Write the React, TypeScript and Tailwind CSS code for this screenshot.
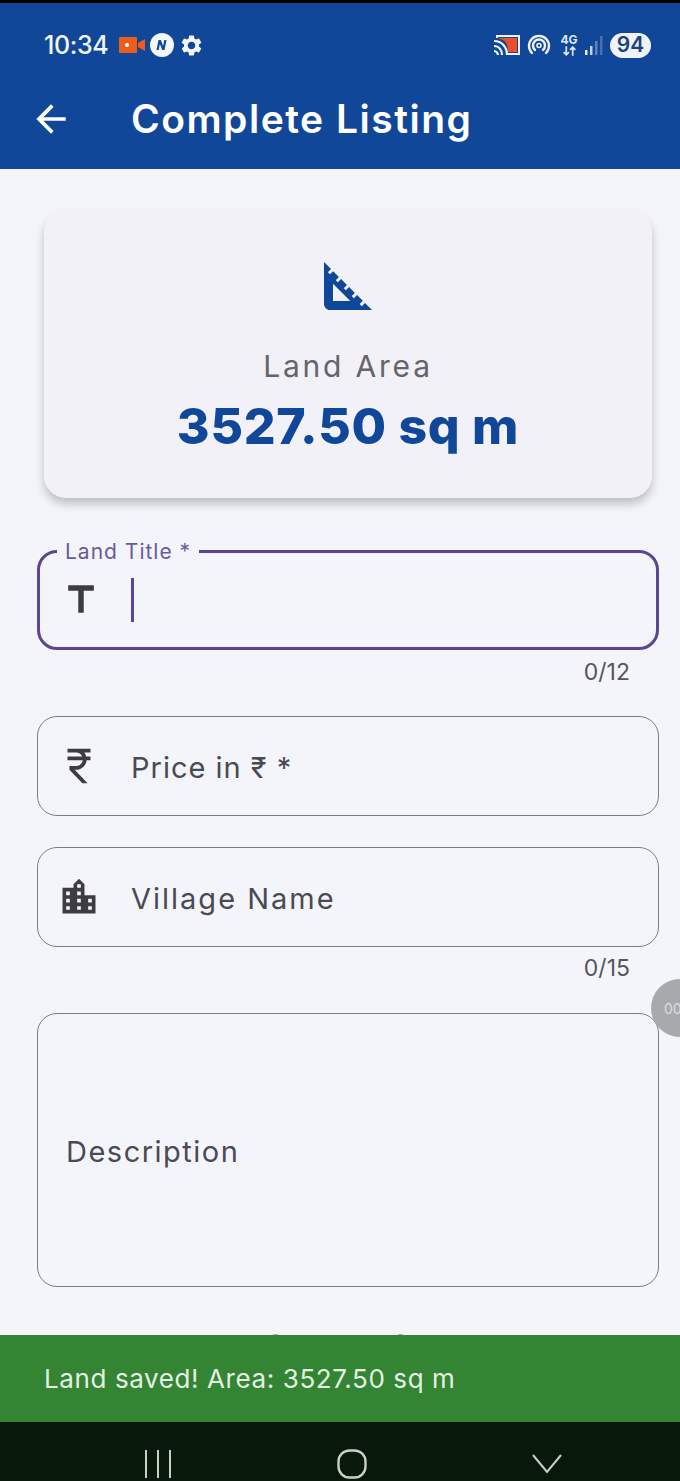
import React from "react";
import { MdArrowBack, MdSettings, MdSquareFoot, MdTitle, MdCurrencyRupee, MdLocationCity } from "react-icons/md";

const font = { fontFamily: '"Inter", "Noto Sans", sans-serif' };

function StatusBar() {
  return (
    <div className="flex h-[42px] items-center justify-between pl-[44px] pr-[29px]">
      <div className="flex items-center">
        <span className="text-[25px] font-medium leading-none text-[#f2f6fb] tracking-[-0.4px]">10:34</span>
        <svg viewBox="0 0 26 16" className="ml-[11px] h-[16px] w-[26px]">
          <rect x="0" y="0" width="18" height="16" rx="1" fill="#ee5d1c" />
          <circle cx="8" cy="8" r="2" fill="#fff" />
          <path d="M19 6l7-4v12l-7-4z" fill="#ee5d1c" />
        </svg>
        <svg viewBox="0 0 24 24" className="ml-[5px] h-[24px] w-[24px]">
          <circle cx="12" cy="12" r="12" fill="#f4f7fb" />
          <path d="M6.5 17l2-10h2.4l2.2 6 1.2-6h2.2l-2 10h-2.3l-2.3-6-1.2 6z" fill="#114799" />
        </svg>
        <MdSettings className="ml-[5px] text-[#f4f7fb]" size={25} />
      </div>
      <div className="flex items-center">
        <svg viewBox="0 0 28 24" className="h-[24px] w-[28px]">
          <path d="M4 5V3h22v18H14" fill="none" stroke="#eef3fa" strokeWidth="2" />
          <path d="M6 5h18v14H15C15 11 12 6 6 6z" fill="#ee4f2b" />
          <path d="M1 8c8 0 13 6 13 14M1 13c5 0 8 4 8 9M1 18c2 0 4 2 4 4" fill="none" stroke="#f4f7fb" strokeWidth="2.2" />
        </svg>
        <svg viewBox="0 0 24 24" className="ml-[6px] h-[24px] w-[24px]">
          <path d="M5 20A10 10 0 1 1 19 20M8 17a6 6 0 1 1 8 0" fill="none" stroke="#eef3fa" strokeWidth="2.4" strokeLinecap="round" />
          <circle cx="12" cy="12.5" r="2" fill="none" stroke="#eef3fa" strokeWidth="1.6" />
        </svg>
        <div className="ml-[9px] flex w-[18px] flex-col items-center leading-none text-[#dfe7f3]">
          <span className="text-[12px] font-bold leading-[12px]">4G</span>
          <svg viewBox="0 0 14 9" className="h-[10px] w-[15px]">
            <path d="M4 0v8M1.5 5.5L4 8l2.500-2.500M10 9V1M7.500 3.500L10 1l2.500 2.500" fill="none" stroke="#dfe7f3" strokeWidth="1.6" />
          </svg>
        </div>
        <svg viewBox="0 0 18 20" className="ml-[7px] h-[20px] w-[18px]">
          <rect x="0" y="15" width="2.500" height="5" fill="#e6edf6" />
          <rect x="5" y="11" width="2.500" height="9" fill="#c4d2e6" />
          <rect x="10" y="6" width="2.500" height="14" fill="#5f82b8" />
          <rect x="15" y="1" width="2.500" height="19" fill="#4a70ad" />
        </svg>
        <div className="ml-[7px] flex h-[25px] w-[41px] items-center justify-center rounded-[13px] bg-[#f0f4f9] text-[21px] font-semibold text-[#1b4380]">94</div>
      </div>
    </div>
  );
}

function Field({ icon, label, height, tracking }: { icon?: React.ReactNode; label: string; height: string; tracking: string }) {
  return (
    <div className={`flex items-center rounded-[20px] border-[1.5px] border-[#7a7d84] ${height}`}>
      {icon ? <div className="mr-[11px] flex w-[82px] justify-center">{icon}</div> : <div className="w-[28px]" />}
      <span className={`pt-[2px] text-[29px] leading-none text-[#4a4a52] ${tracking}`}>{label}</span>
    </div>
  );
}

export default function App() {
  return (
    <div style={font} className="relative flex h-[1481px] w-[680px] flex-col overflow-hidden bg-[#f4f5fb]">
      <header className="h-[169px] shrink-0 border-t-[3px] border-black bg-[#114799]">
        <div className="pt-[21px]"><StatusBar /></div>
        <div className="flex h-[90px] items-center pl-[29px] pt-[15px]">
          <MdArrowBack className="text-white" size={44} />
          <h1 className="ml-[58px] text-[39px] font-semibold leading-none tracking-[1.5px] text-white">Complete Listing</h1>
        </div>
      </header>

      <main className="flex min-h-0 flex-1 flex-col">
        <section className="ml-[44px] mr-[28px] mt-[41px] flex h-[288px] flex-col items-center rounded-[22px] bg-[#f3f1f8] pt-[40px] shadow-[0_6px_10px_rgba(0,0,0,0.22)]">
          <MdSquareFoot className="text-[#114799]" size={72} />
          <div className="mt-[29px] text-[30px] leading-none tracking-[2.8px] text-[#66646a]">Land Area</div>
          <div className="mt-[20px] text-[50px] font-extrabold leading-none tracking-[0.7px] text-[#114799]">3527.50 sq m</div>
        </section>

        <div className="ml-[37px] mr-[21px] mt-[52px] flex flex-col">
          <div className="relative flex h-[100px] items-center rounded-[20px] border-[3px] border-[#5b4596]">
            <div className="absolute left-[17px] top-[-13px] bg-[#f4f5fb] px-[8px] text-[21px] leading-[24px] tracking-[1px] text-[#6a5a9e]">Land Title *</div>
            <div className="flex w-[81px] justify-center"><MdTitle className="text-[#3c3c42]" size={44} /></div>
            <div className="ml-[10px] h-[44px] w-[3px] bg-[#5b4596]" />
          </div>
          <div className="mt-[9px] pr-[29px] text-right text-[23px] leading-[26px] text-[#55555c]">0/12</div>
          <div className="mt-[31px] flex flex-col gap-[31px]">
            <Field height="h-[100px]" tracking="tracking-[1px]" label="Price in ₹ *" icon={<MdCurrencyRupee className="text-[#3c3c42]" size={46} />} />
            <Field height="h-[100px]" tracking="tracking-[2px]" label="Village Name" icon={<MdLocationCity className="text-[#3c3c42]" size={44} />} />
          </div>
          <div className="mt-[8px] pr-[29px] text-right text-[23px] leading-[26px] text-[#55555c]">0/15</div>
          <div className="mt-[32px]"><Field height="h-[274px]" tracking="tracking-[1.5px]" label="Description" /></div>
        </div>
      </main>

      <div className="absolute right-[-29px] top-[979px] flex h-[58px] w-[58px] items-center justify-start rounded-full bg-[#a8a9ac] pl-[13px] text-[14px] text-[#dcdde0]">00</div>

      <div className="relative flex h-[87px] shrink-0 items-center bg-[#338433] pl-[44px]">
        <div className="absolute left-[273px] top-[-1px] h-[1px] w-[5px] rounded-t-full bg-[#a9acb0]" />
        <div className="absolute left-[398px] top-[-1px] h-[1px] w-[5px] rounded-t-full bg-[#a9acb0]" />
        <span className="text-[26px] leading-none tracking-[0.6px] text-[#e4f1e2]">Land saved! Area: 3527.50 sq m</span>
      </div>

      <nav className="flex h-[59px] shrink-0 items-end bg-[#08190a]">
        <div className="flex w-full items-center justify-between pb-[2px] pl-[144px] pr-[118px]">
          <svg viewBox="0 0 28 28" className="h-[28px] w-[28px]">
            <path d="M2 0v28M14 0v28M26 0v28" stroke="#c9cfc9" strokeWidth="2" />
          </svg>
          <svg viewBox="0 0 30 30" className="h-[30px] w-[30px]">
            <rect x="1.500" y="1.500" width="27" height="27" rx="11" fill="none" stroke="#c9cfc9" strokeWidth="2.400" />
          </svg>
          <svg viewBox="0 0 30 20" className="h-[20px] w-[30px]">
            <path d="M1 1l14 17L29 1" fill="none" stroke="#c9cfc9" strokeWidth="2" />
          </svg>
        </div>
      </nav>
    </div>
  );
}
